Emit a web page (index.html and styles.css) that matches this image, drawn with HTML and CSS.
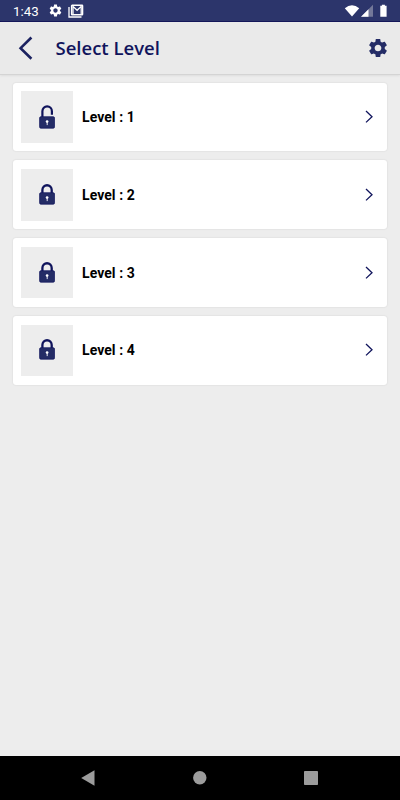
FILE: index.html
```html
<!DOCTYPE html>
<html lang="en">
<head>
<meta charset="utf-8">
<title>Select Level</title>
<link rel="stylesheet" href="styles.css">
</head>
<body>
<svg class="defs" width="0" height="0" aria-hidden="true">
  <symbol id="gear" viewBox="1 1 22 22"><path d="M19.430 12.980c.04-.32.07-.64.07-.98s-.03-.66-.07-.98l2.110-1.650c.19-.15.24-.42.12-.64l-2-3.460c-.12-.22-.39-.3-.61-.22l-2.490 1c-.52-.4-1.080-.73-1.690-.98l-.38-2.650C14.460 2.180 14.250 2 14 2h-4c-.25 0-.46.18-.49.42l-.38 2.650c-.61.25-1.170.59-1.690.98l-2.490-1c-.23-.09-.49 0-.61.22l-2 3.460c-.13.22-.07.49.12.64l2.110 1.650c-.04.32-.07.65-.07.98s.03.66.07.98l-2.110 1.650c-.19.15-.24.42-.12.64l2 3.460c.12.22.39.3.61.22l2.490-1c.52.4 1.080.73 1.690.98l.38 2.650c.03.24.24.42.49.42h4c.25 0 .46-.18.49-.42l.38-2.650c.61-.25 1.170-.59 1.690-.98l2.490 1c.23.09.49 0 .61-.22l2-3.460c.12-.22.07-.49-.12-.64l-2.110-1.650zM12 15.700c-2.040 0-3.700-1.660-3.700-3.700s1.660-3.700 3.700-3.700 3.700 1.660 3.700 3.700-1.660 3.700-3.700 3.700z"/></symbol>
  <symbol id="body" viewBox="0 0 18 26"><rect x="1.600" y="12.700" width="14.900" height="11.500" rx="1.300" fill="#242c66" stroke="#10145c" stroke-width=".7"/><circle cx="9.100" cy="17.500" r="1.350" fill="#fff"/><path d="M9.200 17.500v3.600" stroke="#fff" stroke-width=".9"/></symbol>
  <symbol id="locked" viewBox="0 0 18 26"><path d="M4.400 12V7.900a4.650 4.650 0 0 1 9.300 0V12" fill="none" stroke="#10145c" stroke-width="2.300"/><use href="#body" y="-2" width="18" height="26"/></symbol>
  <symbol id="unlocked" viewBox="0 0 18 26"><path d="M4.400 13V7.200a4.750 4.750 0 0 1 9.500 0V10.800" fill="none" stroke="#10145c" stroke-width="2.200"/><use href="#body" width="18" height="26"/></symbol>
  <symbol id="next" viewBox="0 0 10 14"><path d="M2 1 8 6.700l-6 5.700" fill="none" stroke="#10145c" stroke-width="1.300"/></symbol>
</svg>
<div class="screen">
  <div class="status">
    <span class="time">1:43</span>
    <svg class="s-gear" width="13" height="13"><use href="#gear"/></svg>
    <svg class="s-mail" width="16" height="14" viewBox="0 0 16 14"><path d="M1 3v10h12.500" fill="none" stroke="#fff" stroke-width="1.300"/><rect x="3.600" y="1.300" width="11" height="9.400" rx=".5" fill="none" stroke="#fff" stroke-width="1.400"/><path d="M5 10.500V2.400l4.100 3.900 4.100-3.900v8.100" fill="none" stroke="#fff" stroke-width="1.300"/></svg>
    <svg class="s-right" width="44" height="14" viewBox="0 0 44 14"><path d="M.8 4.200Q8 -1.600 15.200 4.200L8 12.400z" fill="#fff"/><path d="M29 .8V12.800H17z" fill="#737899"/><path d="M24.500 5.300v7.500H17z" fill="#fff"/><path d="M36.300 1.800h1.600V.7h3v1.100h1.700v11h-6.300z" fill="#fff"/></svg>
  </div>
  <header class="bar">
    <svg class="back" width="16" height="24" viewBox="0 0 16 24"><path d="M13.400 1.500 2.600 12.200 13.400 22.700" fill="none" stroke="#1b2260" stroke-width="2.600"/></svg>
    <h1>Select Level</h1>
    <svg class="settings" width="20" height="20"><use href="#gear"/></svg>
  </header>
  <main class="list">
    <div class="card"><div class="thumb"><svg width="18" height="26"><use href="#unlocked"/></svg></div><span>Level : 1</span><svg class="next" width="10" height="14"><use href="#next"/></svg></div>
    <div class="card"><div class="thumb"><svg width="18" height="26"><use href="#locked"/></svg></div><span>Level : 2</span><svg class="next" width="10" height="14"><use href="#next"/></svg></div>
    <div class="card"><div class="thumb"><svg width="18" height="26"><use href="#locked"/></svg></div><span>Level : 3</span><svg class="next" width="10" height="14"><use href="#next"/></svg></div>
    <div class="card"><div class="thumb"><svg width="18" height="26"><use href="#locked"/></svg></div><span>Level : 4</span><svg class="next" width="10" height="14"><use href="#next"/></svg></div>
  </main>
  <nav class="nav">
    <svg width="16" height="16" viewBox="0 0 16 16"><path d="M1.200 8 14.500.3v15.400z"/></svg>
    <svg width="16" height="16" viewBox="0 0 16 16"><circle cx="7.800" cy="7.700" r="6.700"/></svg>
    <svg width="16" height="16" viewBox="0 0 16 16"><rect x="1" y="1" width="14" height="14" rx=".8"/></svg>
  </nav>
</div>
</body>
</html>
```
FILE: styles.css
```css
* { box-sizing: border-box; }
body { margin: 0; }
svg { display: block; flex: none; }
.defs { position: absolute; }
.screen {
  width: 400px;
  height: 800px;
  display: flex;
  flex-direction: column;
  background: #ededed;
  font-family: Roboto, sans-serif;
  overflow: hidden;
}
.status {
  height: 22px;
  flex: none;
  display: flex;
  align-items: center;
  padding: 0 12.500px 0 13px;
  background: #2c356b;
  border-bottom: 1px solid #05084f;
  color: #fff;
}
.time { width: 35.500px; font-size: 13.300px; line-height: 20px; padding-top: 2px; }
.s-gear { fill: #fff; margin-right: 6px; }
.s-right { margin-left: auto; }
.bar {
  height: 53px;
  flex: none;
  display: flex;
  align-items: center;
  padding: 0 12.500px 0 18px;
  background: #eaeaea;
  border-bottom: 1px solid #d4d4d4;
  box-shadow: 0 1px 2px #dedede;
}
.bar h1 {
  margin: 0 0 0 21.500px;
  font: 600 18.500px/26px "Open Sans", sans-serif;
  color: #10145c;
}
.settings { margin-left: auto; fill: #242c66; }
.list {
  flex: 1;
  display: flex;
  flex-direction: column;
  gap: 9px;
  padding: 7.700px 13px 0;
}
.card {
  height: 68.800px;
  flex: none;
  display: flex;
  align-items: center;
  padding: 0 13px 0 8px;
  background: #fff;
  border-radius: 3px;
  box-shadow: 0 0 2px rgba(0, 0, 0, .12);
  font-size: 14px;
  font-weight: 700;
  letter-spacing: .06px;
  color: #000;
}
.thumb {
  width: 52px;
  height: 51.500px;
  display: flex;
  align-items: center;
  justify-content: center;
  margin-right: 9px;
  background: #ededed;
}
.next { margin-left: auto; }
.nav {
  height: 44px;
  flex: none;
  display: flex;
  align-items: center;
  justify-content: space-between;
  padding: 0 81px 0 80px;
  background: #000;
  fill: #9c9c9c;
}
```
